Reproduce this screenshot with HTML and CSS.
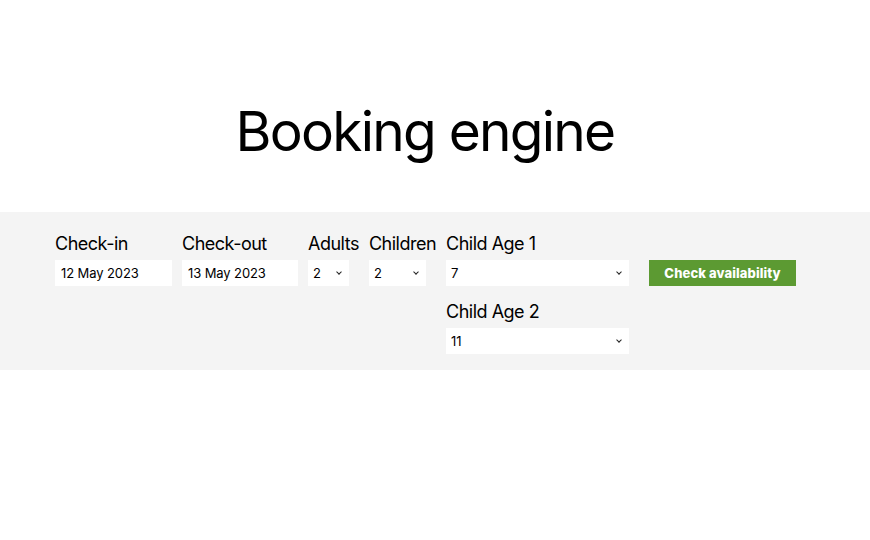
FILE: index.html
```html
<!DOCTYPE html>
<html lang="en">
<head>
<meta charset="utf-8">
<title>Booking engine</title>
<link rel="stylesheet" href="styles.css">
</head>
<body>
<header class="hero">
  <h1 class="title">Booking engine</h1>
</header>
<section class="band">
  <form class="booking">
    <div class="field">
      <label class="label">Check-in</label>
      <input class="input date" type="text" value="12 May 2023">
    </div>
    <div class="field">
      <label class="label">Check-out</label>
      <input class="input date date-out" type="text" value="13 May 2023">
    </div>
    <div class="field">
      <label class="label">Adults</label>
      <div class="select-wrap sel-adults"><select class="select"><option>2</option></select></div>
    </div>
    <div class="field">
      <label class="label">Children</label>
      <div class="select-wrap sel-children"><select class="select"><option>2</option></select></div>
    </div>
    <div class="ages">
      <div class="field">
        <label class="label">Child Age 1</label>
        <div class="select-wrap sel-age"><select class="select"><option>7</option></select></div>
      </div>
      <div class="field">
        <label class="label">Child Age 2</label>
        <div class="select-wrap sel-age"><select class="select"><option>11</option></select></div>
      </div>
    </div>
    <button class="submit" type="button">Check availability</button>
  </form>
</section>
</body>
</html>
```
FILE: styles.css
```css
html, body {
  margin: 0;
  padding: 0;
  background: #ffffff;
  color: #000000;
  font-family: Inter, "Noto Sans", "Liberation Sans", sans-serif;
}

.hero {
  padding-top: 98px;
  padding-right: 20px;
  height: 212px;
  box-sizing: border-box;
  text-align: center;
}

.title {
  margin: 0;
  font-size: 55px;
  font-weight: 400;
  line-height: 66px;
  letter-spacing: -1.75px;
}

.band {
  background: #f4f4f4;
  padding: 21px 0 1px 55px;
}

.booking {
  display: flex;
  align-items: flex-start;
  gap: 10px;
}

.field {
  display: flex;
  flex-direction: column;
  align-items: flex-start;
  gap: 5px;
  padding-bottom: 15px;
}

.label {
  font-size: 18px;
  line-height: 22px;
  letter-spacing: -0.5px;
}

.input {
  box-sizing: border-box;
  height: 26px;
  width: 117px;
  border: 0;
  margin: 0;
  padding: 0 6px;
  background: #ffffff;
  font-family: inherit;
  font-size: 13px;
  letter-spacing: -0.1px;
  color: #000000;
  outline: none;
}

.date-out { width: 116px; }

.select-wrap {
  position: relative;
  height: 26px;
  background: #ffffff;
}

.select-wrap::after {
  content: "";
  position: absolute;
  right: 8px;
  top: 10px;
  width: 3px;
  height: 3px;
  border-right: 1.4px solid #222;
  border-bottom: 1.4px solid #222;
  transform: rotate(45deg);
  pointer-events: none;
}

.select {
  appearance: none;
  -webkit-appearance: none;
  box-sizing: border-box;
  width: 100%;
  height: 26px;
  border: 0;
  margin: 0;
  padding: 0 5px;
  background: transparent;
  font-family: inherit;
  font-size: 13px;
  color: #000000;
  outline: none;
}

.sel-adults { width: 41px; }
.sel-children { width: 57px; }
.sel-age { width: 183px; }

.ages {
  display: flex;
  flex-direction: column;
}

.submit {
  margin: 27px 0 0 10px;
  height: 26px;
  width: 147px;
  border: 0;
  padding: 0;
  background: #5c9a32;
  color: #ffffff;
  font-family: inherit;
  font-size: 13px;
  font-weight: 800;
  letter-spacing: 0.1px;
  cursor: pointer;
}
```
